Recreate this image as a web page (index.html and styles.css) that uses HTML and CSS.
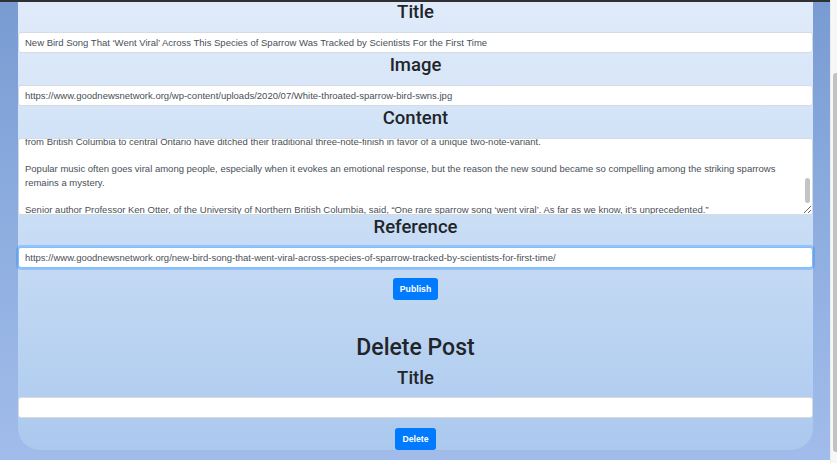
FILE: index.html
```html
<!DOCTYPE html>
<html lang="en">
<head>
<meta charset="utf-8">
<title>Admin – Posts</title>
<link rel="stylesheet" href="styles.css">
</head>
<body>
<div class="page">
  <div class="topbar"></div>
  <main class="main">
    <div class="card">
      <form class="post-form">
        <h3 class="label first">Title</h3>
        <input class="field" type="text" value="New Bird Song That ‘Went Viral’ Across This Species of Sparrow Was Tracked by Scientists For the First Time">
        <h3 class="label">Image</h3>
        <input class="field" type="text" value="https://www.goodnewsnetwork.org/wp-content/uploads/2020/07/White-throated-sparrow-bird-swns.jpg">
        <h3 class="label">Content</h3>
        <div class="area-wrap">
          <textarea class="field area" wrap="off">Scientists have tracked, for the very first time, how a new bird song has gone ‘viral’ across an entire species.

A study published in the journal Current Biology reveals how the song of the white-throated sparrow
has changed dramatically over the last two decades, spreading across the continent at a surprising rate.

Researchers used recordings from citizen scientists and field sites to follow the spread of the new song,
which first appeared in western Canada in the early 2000s and then moved steadily eastward.
Over the last twenty years, the study found, white-throated sparrows
from British Columbia to central Ontario have ditched their traditional three-note-finish in favor of a unique two-note-variant.

Popular music often goes viral among people, especially when it evokes an emotional response, but the reason the new sound became so compelling among the striking sparrows
remains a mystery.

Senior author Professor Ken Otter, of the University of Northern British Columbia, said, “One rare sparrow song ‘went viral’. As far as we know, it’s unprecedented.”

“We don’t know of any other study that has documented a song change spreading this quickly.”
</textarea>
          <span class="area-thumb"></span>
        </div>
        <h3 class="label">Reference</h3>
        <input class="field focused" type="text" value="https://www.goodnewsnetwork.org/new-bird-song-that-went-viral-across-species-of-sparrow-tracked-by-scientists-for-first-time/">
        <div class="actions"><button class="btn" type="button">Publish</button></div>
      </form>
      <form class="delete-form">
        <h2 class="section-title">Delete Post</h2>
        <h3 class="label sub">Title</h3>
        <input class="field" type="text" value="">
        <div class="actions"><button class="btn" type="button">Delete</button></div>
      </form>
    </div>
  </main>
</div>
<div class="scrollbar"><div class="thumb"></div></div>
<script src="script.js"></script>
</body>
</html>
```
FILE: script.js
```js
document.querySelector('.area').scrollTop = 118;
```
FILE: styles.css
```css
* { box-sizing: border-box; }

html, body { height: 100%; }

body {
  margin: 0;
  display: flex;
  align-items: flex-start;
  background: #ffffff;
  font-family: "Liberation Sans", Arial, sans-serif;
  color: #212529;
  overflow: hidden;
}

.page {
  flex: 1;
  display: flex;
  flex-direction: column;
  background: linear-gradient(180deg, #789bd2 0%, #8eaee0 50%, #a1bcea 100%);
}

.topbar {
  height: 2px;
  background: #2e3034;
}

.main {
  padding: 0 17px 10px 18px;
}

.card {
  background: linear-gradient(180deg, #e0ebfa 0%, #c9ddf5 50%, #abc9ee 100%);
  border-radius: 0 0 22px 22px;
  display: flex;
  flex-direction: column;
}

.post-form, .delete-form {
  display: flex;
  flex-direction: column;
}

.label {
  margin: 0 0 8px;
  padding-top: 1px;
  font-family: Roboto, "Liberation Sans", sans-serif;
  font-weight: 500;
  font-size: 18.5px;
  line-height: 23px;
  text-align: center;
  color: #212529;
}

.label.first { margin-top: -2px; }

.label.sub { margin-top: 4px; margin-bottom: 7px; }

.section-title {
  margin: 33px 0 0;
  font-family: Roboto, "Liberation Sans", sans-serif;
  font-weight: 500;
  font-size: 23px;
  line-height: 29px;
  text-align: center;
  color: #212529;
}

.field {
  display: block;
  width: 100%;
  height: 21px;
  margin: 0;
  padding: 0 6px;
  border: 1px solid #d5dbe2;
  border-radius: 3px;
  background: #ffffff;
  font-family: "Liberation Sans", Arial, sans-serif;
  font-size: 9.5px;
  color: #495057;
  outline: none;
}

.field.focused {
  border-color: #80bdff;
  box-shadow: 0 0 0 2px rgba(0, 123, 255, 0.25);
}

.area-wrap {
  position: relative;
}

.area {
  height: 77px;
  padding: 6px 6px;
  line-height: 13.5px;
  resize: vertical;
  overflow: hidden;
  white-space: pre;
}

.area-thumb {
  position: absolute;
  right: 3px;
  top: 40px;
  width: 5px;
  height: 25px;
  border-radius: 3px;
  background: #c4c4c4;
}

.actions {
  display: flex;
  justify-content: center;
  margin-top: 10px;
}

.btn {
  height: 22px;
  padding: 0 7px;
  border: none;
  border-radius: 3px;
  background: #007bff;
  color: #ffffff;
  font-family: "Liberation Sans", Arial, sans-serif;
  font-weight: 700;
  font-size: 8.7px;
}

.scrollbar {
  width: 7px;
  height: 100%;
  background: #f7f7f7;
  border-left: 1px solid #ececec;
  padding-top: 73px;
}

.thumb {
  width: 5px;
  height: 379px;
  margin-left: 2px;
  background: #c2c2c2;
  border-radius: 3px 0 0 3px;
}
```
